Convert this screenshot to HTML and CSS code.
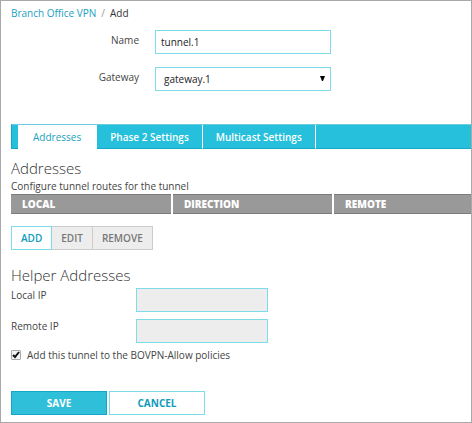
FILE: index.html
```html
<!DOCTYPE html>
<html lang="en">
<head>
<meta charset="utf-8">
<title>Branch Office VPN</title>
<link rel="stylesheet" href="styles.css">
</head>
<body>
<main class="page">
  <nav class="breadcrumb" aria-label="Breadcrumb">
    <a href="#">Branch Office VPN</a>
    <span class="slash">/</span>
    <span>Add</span>
  </nav>
  <form>
    <div class="general">
      <label for="name">Name</label>
      <input class="field" id="name" type="text" value="tunnel.1">
      <label for="gateway">Gateway</label>
      <span class="select">
        <select class="field" id="gateway"><option>gateway.1</option></select>
        <svg class="arrow" viewBox="0 0 5 5" aria-hidden="true"><path d="M0 0h5L3 5H2z"/></svg>
      </span>
    </div>

    <div class="tabs" role="tablist">
      <button class="tab active" type="button" role="tab" aria-selected="true">Addresses</button>
      <button class="tab" type="button" role="tab" aria-selected="false">Phase 2 Settings</button>
      <button class="tab" type="button" role="tab" aria-selected="false">Multicast Settings</button>
    </div>

    <section class="routes">
      <h2>Addresses</h2>
      <p>Configure tunnel routes for the tunnel</p>
      <table>
        <thead>
          <tr><th scope="col">LOCAL</th><th scope="col">DIRECTION</th><th scope="col">REMOTE</th></tr>
        </thead>
      </table>
      <div class="tools">
        <button class="tool" type="button">ADD</button>
        <button class="tool" type="button" disabled>EDIT</button>
        <button class="tool" type="button" disabled>REMOVE</button>
      </div>
    </section>

    <section class="helper">
      <h2>Helper Addresses</h2>
      <div class="helper-grid">
        <label for="local">Local IP</label>
        <input class="field" id="local" type="text" disabled>
        <label for="remote">Remote IP</label>
        <input class="field" id="remote" type="text" disabled>
      </div>
      <div class="check">
        <span class="box">
          <input id="allow" type="checkbox" checked>
          <svg viewBox="0 0 10 10" aria-hidden="true"><path d="M2 5l2 2L8 2"/></svg>
        </span>
        <label for="allow">Add this tunnel to the BOVPN-Allow policies</label>
      </div>
    </section>

    <div class="actions">
      <button class="action primary" type="submit">SAVE</button>
      <button class="action" type="button">CANCEL</button>
    </div>
  </form>
</main>
</body>
</html>
```
FILE: styles.css
```css
* {
  box-sizing: border-box;
}

body {
  margin: 0;
  background: #fff;
  color: #444;
  font: 10px/16px "Open Sans", sans-serif;
}

button,
input,
select {
  margin: 0;
  font: inherit;
}

.page {
  min-height: 100vh;
  padding: 4px 0 7px 10px;
  border: 1px solid #a9a9a9;
}

.breadcrumb {
  display: flex;
  gap: 5px;
  color: #333;
}

.breadcrumb a {
  color: #1a9fc0;
  text-decoration: none;
}

.slash {
  color: #999;
}

.field {
  width: 100%;
  height: 24px;
  padding: 0 5px;
  border: 1px solid #7edbe9;
  border-radius: 0;
  background: #fff;
  color: #222;
}

.field:disabled {
  background: #ededed;
}

.general {
  display: grid;
  grid-template-columns: 128px 176px;
  gap: 13px 16px;
  margin-top: 9px;
}

.general label {
  padding-top: 2px;
  text-align: right;
}

.select {
  display: block;
  position: relative;
}

.select .field {
  display: block;
  padding: 0 8px;
  appearance: none;
}

.arrow {
  position: absolute;
  top: 9px;
  right: 6px;
  width: 5px;
  height: 5px;
  fill: #000;
  pointer-events: none;
}

.tabs {
  display: flex;
  height: 25px;
  margin-top: 33px;
  padding-left: 6px;
  border-top: 1px solid #6dcce0;
  border-left: 1px solid #14a8c8;
  background: #26bfdc;
  box-shadow: inset 0 -1px #14a8c8;
}

.tab {
  padding: 0 13px;
  border: 0;
  border-right: 1px solid #fff;
  border-bottom: 1px solid #14a8c8;
  background: #26bfdc;
  color: #fff;
  font-weight: 600;
}

.tab.active {
  padding: 0 15px;
  border-bottom-color: #fff;
  background: #fff;
  color: #1a9fc0;
  font-weight: 400;
}

h2 {
  margin: 0;
  color: #333;
  font: 300 15px/22px "Open Sans", sans-serif;
}

.routes {
  padding-top: 8px;
}

.routes p {
  margin: 0;
  line-height: 15px;
}

table {
  width: 100%;
  border-collapse: collapse;
  table-layout: fixed;
}

th {
  height: 19px;
  padding: 0 11px;
  border: solid #7b7b7b;
  border-width: 1px 0;
  background: #999;
  color: #fff;
  font-weight: 800;
  line-height: 16px;
  text-align: left;
}

th + th {
  border-left: 2px solid #fff;
}

th:nth-child(-n + 2) {
  width: 35%;
}

.tools {
  display: flex;
  margin-top: 12px;
}

.tool {
  height: 24px;
  padding: 0 9px;
  border: 1px solid #7edbe9;
  background: #fff;
  color: #0f9bbd;
  font-weight: 600;
}

.tool:disabled {
  border-color: #ccc;
  border-left: 0;
  background: #ededed;
  color: #777;
}

.helper {
  padding-top: 14px;
}

.helper-grid {
  display: grid;
  grid-template-columns: 117px 132px;
  gap: 7px 8px;
  margin-top: 2px;
}

.helper-grid label {
  line-height: 14px;
}

.check {
  display: flex;
  align-items: center;
  gap: 6px;
  margin-top: 4px;
}

.box {
  display: block;
  position: relative;
  width: 10px;
  height: 10px;
}

.box input {
  display: block;
  width: 10px;
  height: 10px;
  appearance: none;
  border: 1px solid #aaa;
  border-radius: 1px;
  background: #f4f4f4;
}

.box svg {
  position: absolute;
  inset: 0;
  fill: none;
  stroke: transparent;
  stroke-width: 2;
  pointer-events: none;
}

.box input:checked + svg {
  stroke: #111;
}

.actions {
  display: flex;
  gap: 2px;
  margin-top: 28px;
}

.action {
  width: 96px;
  height: 24px;
  padding: 0;
  border: 1px solid #7edbe9;
  background: #fff;
  color: #0f9bbd;
  font-weight: 700;
}

.action.primary {
  border-color: #14a8c8;
  background: #2fbfd8;
  color: #fff;
}
```
